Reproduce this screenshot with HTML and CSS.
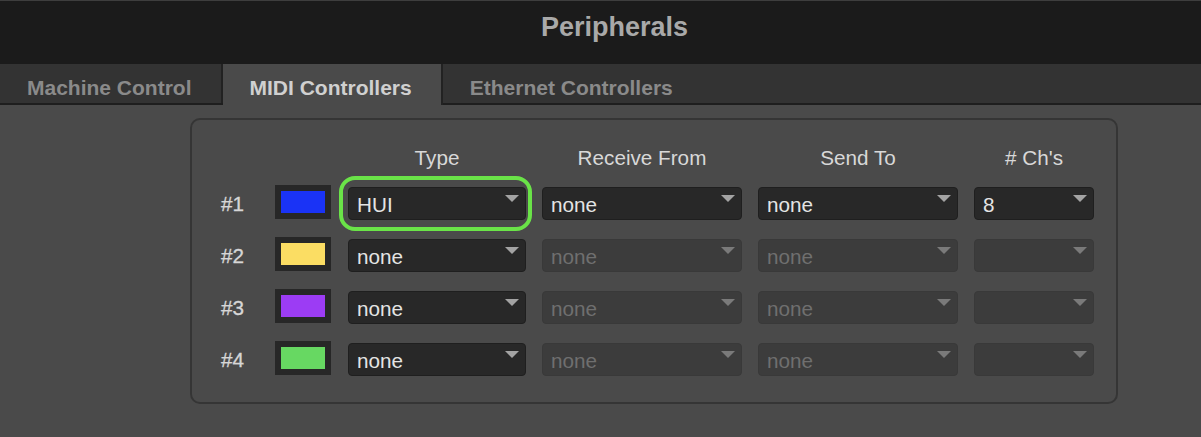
FILE: index.html
```html
<!DOCTYPE html>
<html>
<head>
<meta charset="utf-8">
<link rel="stylesheet" href="styles.css">
</head>
<body>
<header class="titlebar"><span class="title">Peripherals</span></header>
<nav class="tabbar">
  <div class="tab">Machine Control</div>
  <div class="tab active">MIDI Controllers</div>
  <div class="tab last">Ethernet Controllers</div>
</nav>
<section class="panel">
  <div class="grid">
    <div></div><div></div>
    <div class="hdr">Type</div>
    <div class="hdr">Receive From</div>
    <div class="hdr">Send To</div>
    <div class="hdr"># Ch's</div>

    <div class="num">#1</div>
    <div class="swatch"><span class="fill blue"></span></div>
    <div class="dd focus"><span class="val">HUI</span><span class="arrow"></span></div>
    <div class="dd"><span class="val">none</span><span class="arrow"></span></div>
    <div class="dd"><span class="val">none</span><span class="arrow"></span></div>
    <div class="dd"><span class="val">8</span><span class="arrow"></span></div>

    <div class="num">#2</div>
    <div class="swatch"><span class="fill yellow"></span></div>
    <div class="dd"><span class="val">none</span><span class="arrow"></span></div>
    <div class="dd off"><span class="val">none</span><span class="arrow"></span></div>
    <div class="dd off"><span class="val">none</span><span class="arrow"></span></div>
    <div class="dd off"><span class="val"></span><span class="arrow"></span></div>

    <div class="num">#3</div>
    <div class="swatch"><span class="fill purple"></span></div>
    <div class="dd"><span class="val">none</span><span class="arrow"></span></div>
    <div class="dd off"><span class="val">none</span><span class="arrow"></span></div>
    <div class="dd off"><span class="val">none</span><span class="arrow"></span></div>
    <div class="dd off"><span class="val"></span><span class="arrow"></span></div>

    <div class="num">#4</div>
    <div class="swatch"><span class="fill green"></span></div>
    <div class="dd"><span class="val">none</span><span class="arrow"></span></div>
    <div class="dd off"><span class="val">none</span><span class="arrow"></span></div>
    <div class="dd off"><span class="val">none</span><span class="arrow"></span></div>
    <div class="dd off"><span class="val"></span><span class="arrow"></span></div>
  </div>
</section>
</body>
</html>
```
FILE: styles.css
```css
* { box-sizing: border-box; }
html, body { margin: 0; padding: 0; }
body {
  background: #4a4a4a;
  font-family: "Liberation Sans", Arial, sans-serif;
  width: 1201px;
  height: 437px;
  overflow: hidden;
}
.titlebar {
  height: 64px;
  background: #1b1b1b;
  border-top: 1px solid #3e3e3e;
  display: flex;
  justify-content: center;
  padding-left: 28px;
}
.title {
  font-size: 27px;
  font-weight: bold;
  color: #a9a9a9;
  line-height: 53px;
}
.tabbar {
  display: flex;
  align-items: flex-start;
  height: 41px;
  background: #333333;
  border-bottom: 2px solid #1e1e1e;
}
.tab {
  height: 39px;
  padding: 8px 29px 0 27px;
  line-height: 31px;
  font-size: 21px;
  font-weight: bold;
  color: #8a8a8a;
  border-right: 2px solid #222222;
}
.tab.last { border-right: none; }
.tab.active {
  height: 41px;
  margin-bottom: -2px;
  background: #4a4a4a;
  color: #d0d0d0;
}
.panel {
  margin: 13px 0 0 190px;
  width: 928px;
  height: 286px;
  border: 2px solid #353535;
  border-radius: 10px;
  padding: 28px 0 0 29px;
}
.grid {
  display: grid;
  grid-template-columns: 38px 57px 178px 200px 200px 120px;
  grid-template-rows: 20px repeat(4, 34px);
  column-gap: 16px;
  row-gap: 18px;
  align-items: center;
}
.hdr {
  text-align: center;
  font-size: 20.7px;
  line-height: 20px;
  color: #d8d8d8;
}
.num {
  font-size: 20.7px;
  color: #d6d6d6;
  line-height: 24px;
  padding-top: 1px;
  -webkit-text-stroke: 0.3px #d6d6d6;
}
.swatch {
  width: 56px;
  height: 34px;
  border: 6px solid #272727;
  background: #272727;
  margin-top: -2px;
}
.fill { display: block; width: 100%; height: 100%; }
.blue { background: #1a33f6; }
.yellow { background: #fbdd63; }
.purple { background: #9c3cf4; }
.green { background: #67d862; }
.dd {
  position: relative;
  height: 33px;
  display: flex;
  align-items: flex-start;
  padding: 0 6px 0 8px;
  background: #282828;
  border: 1px solid #1f1f1f;
  border-radius: 4px;
  font-size: 20.7px;
  color: #e4e4e4;
}
.val {
  flex: 1;
  line-height: 29px;
  margin-top: 2px;
  white-space: nowrap;
}
.arrow {
  margin-top: 7px;
  width: 0;
  height: 0;
  border-left: 7px solid transparent;
  border-right: 7px solid transparent;
  border-top: 7px solid #a3a3a3;
}
.dd.off {
  background: #3c3c3c;
  border-color: #393939;
  color: #6f6f6f;
}
.dd.off .arrow { border-top-color: #7a7a7a; }
.dd.focus::after {
  content: "";
  position: absolute;
  top: -12px;
  bottom: -12px;
  left: -10px;
  right: -7px;
  border: 4.5px solid #6ae348;
  border-radius: 16px;
  pointer-events: none;
}
```
